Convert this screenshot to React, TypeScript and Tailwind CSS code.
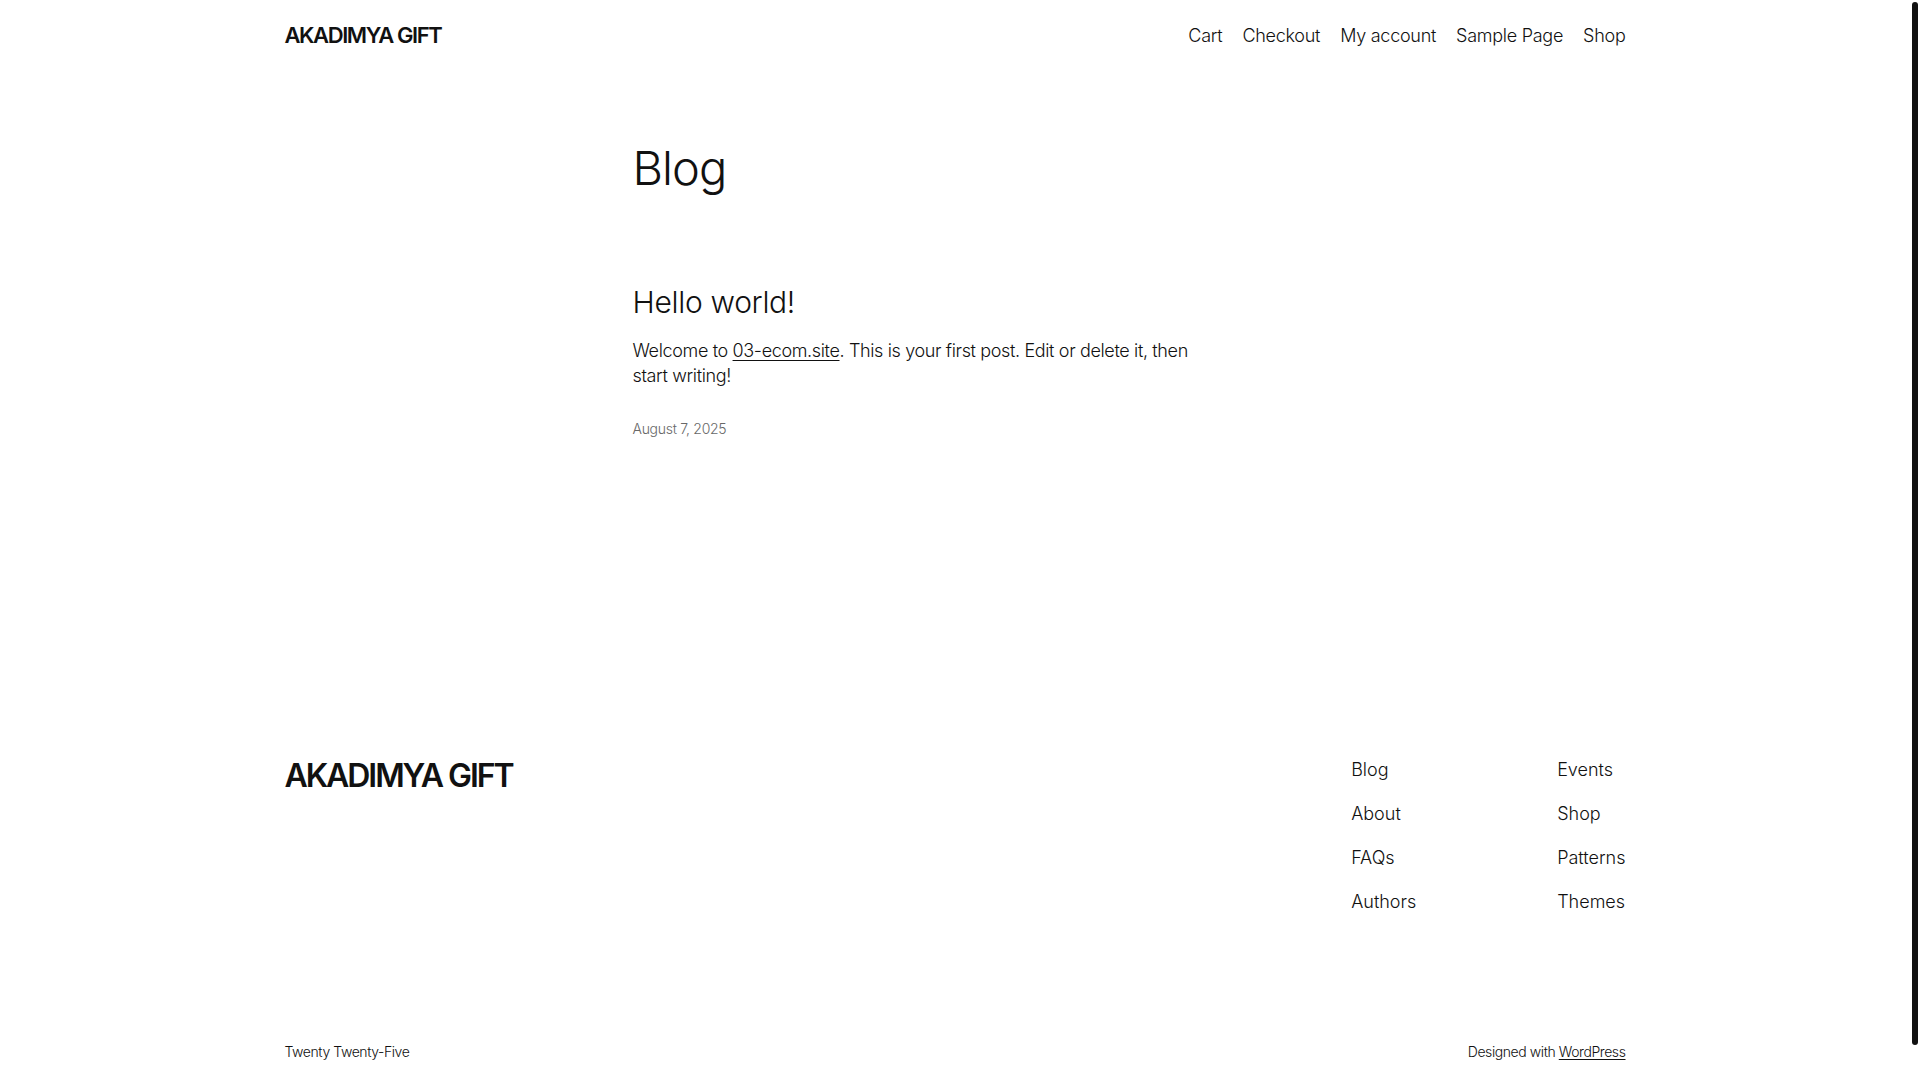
import React from 'react';

const font = { fontFamily: 'Inter, "Noto Sans", sans-serif' };

const headerLinks = ['Cart', 'Checkout', 'My account', 'Sample Page', 'Shop'];
const footerCols = [
    ['Blog', 'About', 'FAQs', 'Authors'],
    ['Events', 'Shop', 'Patterns', 'Themes'],
];

const SiteHeader: React.FC = () => (
    <header className="w-[1341px] mx-auto h-[70px] flex items-center justify-between">
        <a className="text-[22px] font-semibold tracking-[-0.065em] text-[#111]">AKADIMYA GIFT</a>
        <nav className="flex items-center gap-[20px] text-[18px] font-light tracking-[-0.015em] text-[#111]">
            {headerLinks.map(link => (
                <a key={link}>{link}</a>
            ))}
        </nav>
    </header>
);

const PostList: React.FC = () => (
    <main className="w-[645px] mx-auto text-[#111]">
        <h1 className="mt-[70px] text-[47px] leading-[1.2] font-light tracking-[-0.02em]">Blog</h1>

        <article className="mt-[88px]">
            <h2 className="text-[30px] leading-[1.2] font-light tracking-[-0.01em]">Hello world!</h2>
            <p className="mt-[18px] max-w-[575px] text-[18px] leading-[25px] font-light tracking-[-0.02em]">
                Welcome to <a className="underline underline-offset-[3px] decoration-1">03-ecom.site</a>. This is your first post. Edit or delete it, then start writing!
            </p>
            <div className="mt-[31px] text-[14px] leading-[1.4] font-light tracking-[-0.02em] text-[#686868]">August 7, 2025</div>
        </article>
    </main>
);

const SiteFooter: React.FC = () => (
    <footer className="w-[1341px] mx-auto mt-[318px] text-[#111]">
        <div className="flex items-start justify-between">
            <a className="text-[32px] leading-[1.2] font-semibold tracking-[-0.065em]">AKADIMYA GIFT</a>
            <div className="flex">
                {footerCols.map((col, i) => (
                    <ul key={i} className={`flex flex-col gap-[18.8px] text-[18px] leading-[1.4] font-light ${i === 0 ? 'w-[206px]' : ''}`}>
                        {col.map(item => (
                            <li key={item}>{item}</li>
                        ))}
                    </ul>
                ))}
            </div>
        </div>

        <div className="mt-[128px] flex items-center justify-between text-[14px] leading-[1.4] font-light tracking-[-0.03em]">
            <span>Twenty Twenty-Five</span>
            <span>
                Designed with <a className="underline underline-offset-2 decoration-1">WordPress</a>
            </span>
        </div>
    </footer>
);

export default function App() {
    return (
        <div className="flex h-screen w-full bg-white overflow-hidden" style={font}>
            <div className="flex-1 flex flex-col">
                <SiteHeader />
                <PostList />
                <SiteFooter />
            </div>
            {/* scrollbar gutter */}
            <div className="w-[10px] shrink-0">
                <div className="mt-[2px] ml-[2px] w-[6px] h-[1043px] rounded-full bg-[#111]" />
            </div>
        </div>
    );
}
